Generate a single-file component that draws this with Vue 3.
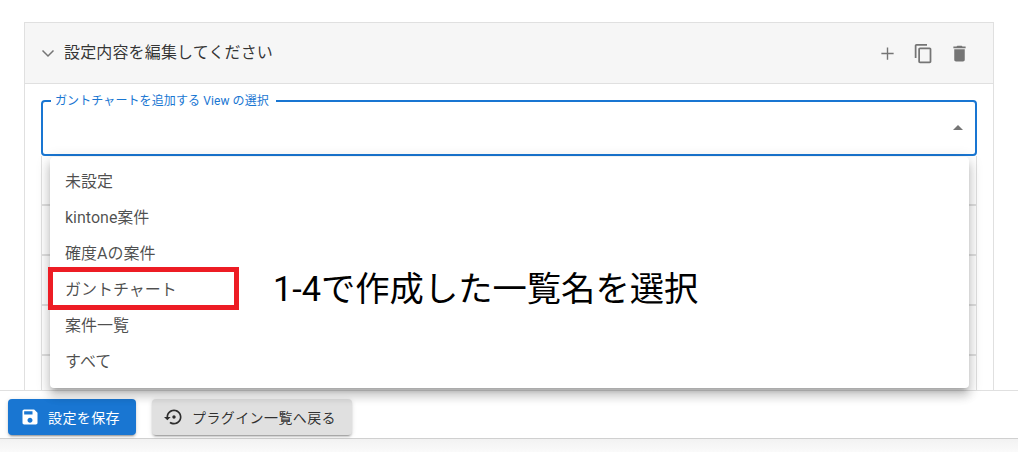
<script setup>
const options = ['未設定', 'kintone案件', '確度Aの案件', 'ガントチャート', '案件一覧', 'すべて']
const rows = [1, 2, 3, 4, 5]
</script>

<template>
  <div class="page">
    <main class="scroll">
      <section class="panel">
        <header class="panel-head">
          <svg class="chevron" viewBox="0 0 24 24"><path d="M6.5 9.5 12 15l5.5-5.5" /></svg>
          <h2 class="title">設定内容を編集してください</h2>
          <div class="actions">
            <svg viewBox="0 0 24 24"><path d="M19 12.8h-6.2V19h-1.6v-6.200H5v-1.600h6.200V5h1.600v6.200H19z" /></svg>
            <svg viewBox="0 0 24 24"><path d="M16 1H4c-1.100 0-2 .9-2 2v14h2V3h12V1zm3 4H8c-1.100 0-2 .9-2 2v14c0 1.100.9 2 2 2h11c1.100 0 2-.9 2-2V7c0-1.100-.9-2-2-2zm0 16H8V7h11v14z" /></svg>
            <svg viewBox="0 0 24 24"><path d="M6 19c0 1.100.9 2 2 2h8c1.100 0 2-.9 2-2V7H6v12zM19 4h-3.500l-1-1h-5l-1 1H5v2h14V4z" /></svg>
          </div>
        </header>
        <div class="panel-body">
          <div class="field">
            <fieldset class="outline"><legend>ガントチャートを追加する View の選択</legend></fieldset>
            <svg class="caret" viewBox="0 0 24 24"><path d="m7 14 5-5 5 5z" /></svg>
          </div>
          <div class="rows">
            <div v-for="r in rows" :key="r" class="row"></div>
          </div>
        </div>
      </section>
    </main>

    <footer class="footer">
      <button class="btn primary">
        <svg viewBox="0 0 24 24"><path d="M17 3H5c-1.110 0-2 .9-2 2v14c0 1.100.89 2 2 2h14c1.100 0 2-.9 2-2V7l-4-4zm-5 16c-1.660 0-3-1.340-3-3s1.340-3 3-3 3 1.340 3 3-1.340 3-3 3zm3-10H5V5h10v4z" /></svg>
        設定を保存
      </button>
      <button class="btn neutral">
        <svg viewBox="0 0 24 24"><path d="M14 12c0-1.100-.9-2-2-2s-2 .9-2 2 .9 2 2 2 2-.9 2-2zm-2-9c-4.970 0-9 4.030-9 9H0l4 4 4-4H5c0-3.870 3.130-7 7-7s7 3.130 7 7-3.130 7-7 7c-1.510 0-2.910-.49-4.060-1.300l-1.420 1.440C8.040 20.300 9.940 21 12 21c4.970 0 9-4.030 9-9s-4.030-9-9-9z" /></svg>
        プラグイン一覧へ戻る
      </button>
    </footer>
    <div class="bottom"></div>

    <ul class="menu">
      <li v-for="o in options" :key="o">{{ o }}</li>
    </ul>
    <div class="mark"></div>
    <p class="note">1-4で作成した一覧名を選択</p>
  </div>
</template>

<style>
html, body { margin: 0; background: #fff; }
</style>

<style scoped>
.page {
  position: relative;
  width: 1018px;
  height: 452px;
  overflow: hidden;
  display: flex;
  flex-direction: column;
  font-family: Roboto, "Noto Sans CJK JP", sans-serif;
  color: rgba(0, 0, 0, 0.87);
}
.scroll {
  height: 391px;
  flex: none;
  padding: 22px 24px 0;
  box-sizing: border-box;
  overflow: hidden;
  border-bottom: 1px solid #e0e0e0;
}
.panel {
  border: 1px solid #e0e0e0;
  border-bottom: 0;
  height: 100%;
  box-sizing: border-box;
}
.panel-head {
  height: 60px;
  background: #f6f6f6;
  border-bottom: 1px solid #e0e0e0;
  display: flex;
  align-items: center;
  padding: 0 23px 0 11px;
}
.chevron { width: 24px; height: 24px; fill: none; stroke: #757575; stroke-width: 1.5; margin-right: 4px; }
.title { margin: 0; font-size: 16px; letter-spacing: .15px; font-weight: 400; line-height: 1; color: rgba(0,0,0,.8); }
.actions { margin-left: auto; display: flex; gap: 15px; }
.actions svg { width: 21px; height: 21px; fill: #757575; }
.panel-body { padding: 16px 16px 0; }
.field {
  position: relative;
  height: 56px;
  display: flex;
  align-items: center;
  justify-content: flex-end;
}
.outline {
  position: absolute;
  inset: -6px 0 0;
  margin: 0;
  padding: 0 8px;
  border: 2px solid #1976d2;
  border-radius: 4px;
}
.outline legend {
  padding: 0 7px 0 4px;
  font-size: 12px;
  letter-spacing: .1px;
  line-height: 14px;
  color: #1976d2;
}
.caret { width: 24px; height: 24px; fill: #757575; margin-right: 7px; }
.row {
  height: 50px;
  box-sizing: border-box;
  border: 1px solid #e0e0e0;
  border-width: 0 1px 2px;
}
.footer {
  height: 48px;
  flex: none;
  box-sizing: border-box;
  border-bottom: 1px solid #d0d0d0;
  background: #fff;
  display: flex;
  align-items: flex-start;
  gap: 16px;
  padding: 8px 8px 0;
}
.bottom { flex: 1; background: linear-gradient(#f2f2f2, #fafafa); }
.btn {
  height: 36px;
  border: 0;
  border-radius: 4px;
  padding: 0 16px 0 12px;
  display: flex;
  align-items: center;
  gap: 8px;
  font-family: inherit;
  font-size: 14px;
  letter-spacing: .4px;
  box-shadow: 0 3px 1px -2px rgba(0,0,0,.2), 0 2px 2px 0 rgba(0,0,0,.14), 0 1px 5px 0 rgba(0,0,0,.12);
}
.btn svg { width: 20px; height: 20px; fill: currentColor; }
.primary { background: #1976d2; color: #fff; }
.neutral { background: #e0e0e0; color: rgba(0,0,0,.8); }
.menu {
  position: absolute;
  left: 50px;
  top: 157px;
  width: 919px;
  height: 231px;
  box-sizing: border-box;
  margin: 0;
  padding: 7px 0 0;
  list-style: none;
  background: #fff;
  border-radius: 4px;
  box-shadow: 0 5px 5px -3px rgba(0,0,0,.2), 0 8px 10px 1px rgba(0,0,0,.14), 0 3px 14px 2px rgba(0,0,0,.12);
}
.menu li {
  height: 36px;
  line-height: 36px;
  padding-left: 15px;
  font-size: 16px;
  color: rgba(0, 0, 0, 0.7);
}
.mark {
  position: absolute;
  left: 48px;
  top: 267px;
  width: 191px;
  height: 43px;
  box-sizing: border-box;
  border: 5px solid #ed1c24;
}
.note {
  position: absolute;
  left: 273px;
  top: 265px;
  margin: 0;
  font-size: 34.3px;
  line-height: 48px;
  color: #000;
  white-space: nowrap;
}
</style>
